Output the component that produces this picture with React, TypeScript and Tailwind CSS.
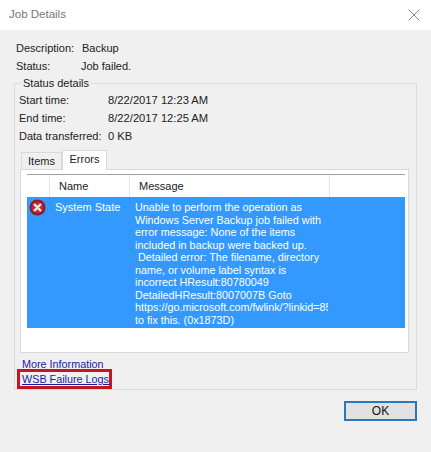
const font = { fontFamily: '"Liberation Sans", sans-serif' };

const messageLines = [
  'Unable to perform the operation as',
  'Windows Server Backup job failed with',
  'error message: None of the items',
  'included in backup were backed up.',
  '\u00a0Detailed error: The filename, directory',
  'name, or volume label syntax is',
  'incorrect HResult:80780049',
  'DetailedHResult:8007007B Goto',
  'https://go.microsoft.com/fwlink/?linkid=852',
  'to fix this. (0x1873D)',
];

function ErrorIcon() {
  return (
    <svg width="17" height="17" viewBox="0 0 17 17" className="shrink-0">
      <circle cx="8.5" cy="8.5" r="8" fill="#8f1a24" />
      <circle cx="8.5" cy="8.5" r="6" fill="#b82a35" />
      <path d="M5.7 5.7l5.6 5.6M11.3 5.7l-5.6 5.6" stroke="#f6e4e4" strokeWidth="2.4" strokeLinecap="round" />
    </svg>
  );
}

export default function App() {
  return (
    <div className="w-[431px] h-[452px] flex flex-col overflow-hidden bg-[#f0f0f0] text-[11px] text-[#222]" style={font}>
      {/* Title bar */}
      <div className="h-[30px] shrink-0 bg-white flex items-center justify-between pl-[9px] pr-[11px]">
        <span className="text-[11.5px] text-[#777]">Job Details</span>
        <svg width="12" height="12" viewBox="0 0 12 12">
          <path d="M.5.5l11 11M11.5.5l-11 11" stroke="#8a8a8a" strokeWidth="1" fill="none" />
        </svg>
      </div>

      <div className="flex-1 flex flex-col pl-[14px] pr-[14px]">
        {/* Summary */}
        <div className="grid grid-cols-[65px_1fr] auto-rows-[18px] items-center pl-[2px] mt-[9px]">
          <span>Description:</span>
          <span className="pl-[1px]">Backup</span>
          <span>Status:</span>
          <span>Job failed.</span>
        </div>

        {/* Status details group */}
        <fieldset className="border border-[#dcdcdc] h-[314px] mt-[1px] flex flex-col min-w-0">
          <legend className="ml-[7px] px-[1px] leading-[14px]">Status details</legend>
          <div className="grid grid-cols-[89px_1fr] auto-rows-[18px] items-center pl-[4px] mt-[1px] whitespace-nowrap">
            <span>Start time:</span>
            <span className="text-[11.2px]">8/22/2017 12:23 AM</span>
            <span>End time:</span>
            <span className="text-[11.2px]">8/22/2017 12:25 AM</span>
            <span>Data transferred:</span>
            <span className="text-[11.2px]">0 KB</span>
          </div>

          {/* Tabs */}
          <div className="flex items-end h-[21px] pl-[6px] mt-[3px] relative z-10">
            <div className="h-[17px] w-[41px] border border-b-0 border-[#d9d9d9] bg-[#f0f0f0] flex items-center justify-center">Items</div>
            <div className="h-[20px] w-[45px] border border-b-0 border-[#d9d9d9] bg-white flex items-center justify-center pb-[3px] mb-[-1px]">Errors</div>
          </div>

          {/* Tab page */}
          <div className="h-[184px] mx-[5px] mr-[7px] border border-[#d9d9d9] bg-white pt-[4px] px-[6px] pr-[3px]">
            <div className="border-t border-[#a0a0a0] h-[23px] flex">
              <div className="w-[23px] border-r border-[#e5e5e5]"></div>
              <div className="w-[80px] border-r border-[#e5e5e5] pl-[9px] leading-[22px]">Name</div>
              <div className="w-[200px] border-r border-[#e5e5e5] pl-[9px] leading-[22px]">Message</div>
            </div>
            <div className="h-[131px] bg-[#3399ff] text-white flex">
              <div className="w-[23px] pl-[2px] pt-[2px]"><ErrorIcon /></div>
              <div className="w-[83px] pl-[5px] pt-[4px] leading-[12.5px]">System State</div>
              <div className="w-[195px] pl-[2px] pt-[4px] text-[10.8px] leading-[12.5px] overflow-hidden whitespace-nowrap">
                {messageLines.map((line) => (
                  <div key={line}>{line}</div>
                ))}
              </div>
            </div>
          </div>

          {/* Links */}
          <div className="flex flex-col items-start pl-[5px] mt-[4px] text-[10.8px] text-[#1a1aa6]">
            <a className="underline leading-[15px] px-[2px]">More Information</a>
            <a className="underline leading-[14px] pl-[2px] outline-[3px] outline-[#c4161c]">WSB Failure Logs</a>
          </div>
        </fieldset>

        {/* Footer */}
        <div className="flex justify-end mt-[11px]">
          <button className="w-[73px] h-[20px] bg-[#e1e1e1] border-2 border-[#2b78b8] text-[12px] text-[#111] flex items-center justify-center">OK</button>
        </div>
      </div>
    </div>
  );
}
